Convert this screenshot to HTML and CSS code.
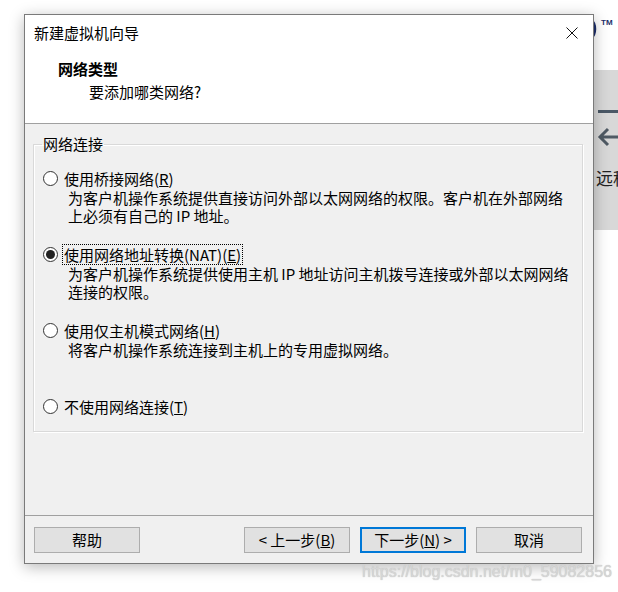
FILE: index.html
```html
<!DOCTYPE html>
<html lang="zh-CN">
<head>
<meta charset="utf-8">
<title>新建虚拟机向导</title>
<link rel="stylesheet" href="styles.css">
</head>
<body>
<div class="desktop">
  <div class="backdrop">
    <div class="bg-top">
      <svg class="logo" width="10" height="22" viewBox="0 0 10 22"><path d="M2 1 C8 6 8 16 2 21" fill="none" stroke="#1d2f6b" stroke-width="3.5"/></svg>
      <span class="tm">TM</span>
    </div>
    <div class="bg-band">
      <div class="bar"></div>
      <svg class="arrow" width="22" height="20" viewBox="0 0 22 20"><path d="M22 10H3M11 2L3 10L11 18" fill="none" stroke="#4f5a64" stroke-width="3"/></svg>
      <div class="bg-text">远程</div>
    </div>
    <div class="bg-rest"></div>
  </div>

  <div class="dialog">
    <div class="titlebar">
      <span class="title">新建虚拟机向导</span>
      <span class="close"><svg width="12" height="12" viewBox="0 0 12 12"><path d="M0.5 0.5L11.5 11.5M11.5 0.5L0.5 11.5" stroke="#111" stroke-width="1"/></svg></span>
    </div>
    <div class="header">
      <div class="h-title">网络类型</div>
      <div class="h-sub">要添加哪类网络?</div>
    </div>
    <div class="body">
      <fieldset class="group">
        <legend>网络连接</legend>
        <div class="options">
          <div class="option">
            <div class="opt-row"><span class="radio"></span><span class="opt-label">使用桥接网络(<u>R</u>)</span></div>
            <div class="opt-desc">为客户机操作系统提供直接访问外部以太网网络的权限。客户机在外部网络<br>上必须有自己的 IP 地址。</div>
          </div>
          <div class="option">
            <div class="opt-row"><span class="radio checked"></span><span class="opt-label focused">使用网络地址转换(NAT)(<u>E</u>)</span></div>
            <div class="opt-desc">为客户机操作系统提供使用主机 IP 地址访问主机拨号连接或外部以太网网络<br>连接的权限。</div>
          </div>
          <div class="option">
            <div class="opt-row"><span class="radio"></span><span class="opt-label">使用仅主机模式网络(<u>H</u>)</span></div>
            <div class="opt-desc">将客户机操作系统连接到主机上的专用虚拟网络。</div>
          </div>
          <div class="option">
            <div class="opt-row"><span class="radio"></span><span class="opt-label">不使用网络连接(<u>T</u>)</span></div>
          </div>
        </div>
      </fieldset>
    </div>
    <div class="footer">
      <button class="btn help">帮助</button>
      <button class="btn">&lt; 上一步(<u>B</u>)</button>
      <button class="btn default">下一步(<u>N</u>) &gt;</button>
      <button class="btn">取消</button>
    </div>
  </div>

  <div class="watermark">https://blog.csdn.net/m0_59082856</div>
</div>
</body>
</html>
```

FILE: styles.css
```css
* { box-sizing: border-box; }
html, body { margin: 0; padding: 0; }
body {
  width: 618px;
  height: 592px;
  overflow: hidden;
  background: #fff;
  font-family: "Noto Sans CJK SC", "Noto Sans", sans-serif;
  font-size: 15px;
  color: #000;
}
.desktop { position: relative; width: 618px; height: 592px; }

/* background application behind the dialog */
.backdrop { display: flex; flex-direction: column; height: 100%; }
.bg-top {
  height: 70px;
  padding: 18px 0 0 588px;
  display: flex;
  align-items: flex-start;
}
.tm {
  margin: 1px 0 0 3px;
  font-family: "Liberation Sans", sans-serif;
  font-size: 8px;
  line-height: 8px;
  font-weight: 700;
  color: #1d2f6b;
}
.bg-band {
  height: 160px;
  margin-left: 560px;
  background: #d8d8d8;
  padding: 40px 0 0 36px;
  display: flex;
  flex-direction: column;
}
.bar { width: 22px; height: 3px; margin-left: 2px; background: #4a5866; }
.arrow { margin-top: 14px; margin-left: 1px; }
.bg-text { margin-top: 21px; font-size: 17px; line-height: 20px; color: #222; white-space: nowrap; }
.bg-rest { flex: 1; background: #fff; }

/* dialog window */
.dialog {
  position: absolute;
  left: 24px;
  top: 14px;
  width: 570px;
  height: 550px;
  border: 1px solid #7a7a7a;
  background: #f0f0f0;
  box-shadow: 0 3px 14px rgba(0, 0, 0, 0.28);
  display: flex;
  flex-direction: column;
}
.titlebar {
  height: 36px;
  background: #fff;
  display: flex;
  align-items: center;
  justify-content: space-between;
  padding-left: 9px;
}
.title { line-height: 20px; }
.close {
  width: 42px;
  height: 36px;
  display: flex;
  align-items: center;
  justify-content: center;
}
.header {
  height: 73px;
  background: #fff;
  border-bottom: 1px solid #a0a0a0;
  padding: 8px 0 0 33px;
}
.h-title { font-weight: 700; line-height: 20px; }
.h-sub { line-height: 20px; margin-top: 3px; padding-left: 31px; }

.body {
  flex: 1;
  padding: 10px 10px 0 8px;
  border-bottom: 1px solid #a0a0a0;
}
.group {
  margin: 0;
  padding: 0;
  min-width: 0;
  border: 1px solid #d9d9d9;
  box-shadow: inset 1px 1px 0 #fff, 1px 1px 0 #fff;
}
.group legend {
  margin-left: 8px;
  padding: 0 1px;
  line-height: 20px;
}
.options {
  display: grid;
  grid-template-rows: 76px 76px 76px auto;
  padding: 14px 0 15px 9px;
}
.opt-row {
  display: flex;
  align-items: center;
  height: 20px;
  line-height: 20px;
  white-space: nowrap;
}
.radio {
  width: 15px;
  height: 15px;
  border: 1px solid #333;
  border-radius: 50%;
  background: #fff;
  margin-right: 5px;
  display: flex;
  align-items: center;
  justify-content: center;
  flex: none;
}
.radio.checked::after {
  content: "";
  width: 9px;
  height: 9px;
  border-radius: 50%;
  background: #222;
}
.opt-label { padding: 0 1px 0 1px; line-height: 19px; }
.opt-label.focused { outline: 1px dotted #000; outline-offset: 0; }
.opt-desc {
  padding-left: 25px;
  margin-top: 1px;
  line-height: 18px;
  white-space: nowrap;
}

.footer {
  height: 47px;
  padding: 11px 11px 0 9px;
  display: flex;
  gap: 10px;
}
.btn {
  width: 106px;
  height: 26px;
  padding: 0;
  border: 1px solid #adadad;
  background: #e1e1e1;
  font-family: inherit;
  font-size: 15px;
  line-height: 22px;
  color: #000;
  text-align: center;
}
.btn.help { margin-right: auto; }
.btn.default {
  border-color: #0078d7;
  box-shadow: inset 0 0 0 1px #0078d7;
}

.watermark {
  position: absolute;
  left: 362px;
  top: 562px;
  font-family: "Liberation Sans", sans-serif;
  font-size: 16px;
  line-height: 20px;
  color: #d6d6d6;
  text-shadow: 0 0 1px #b8b8b8;
  white-space: nowrap;
}
```
